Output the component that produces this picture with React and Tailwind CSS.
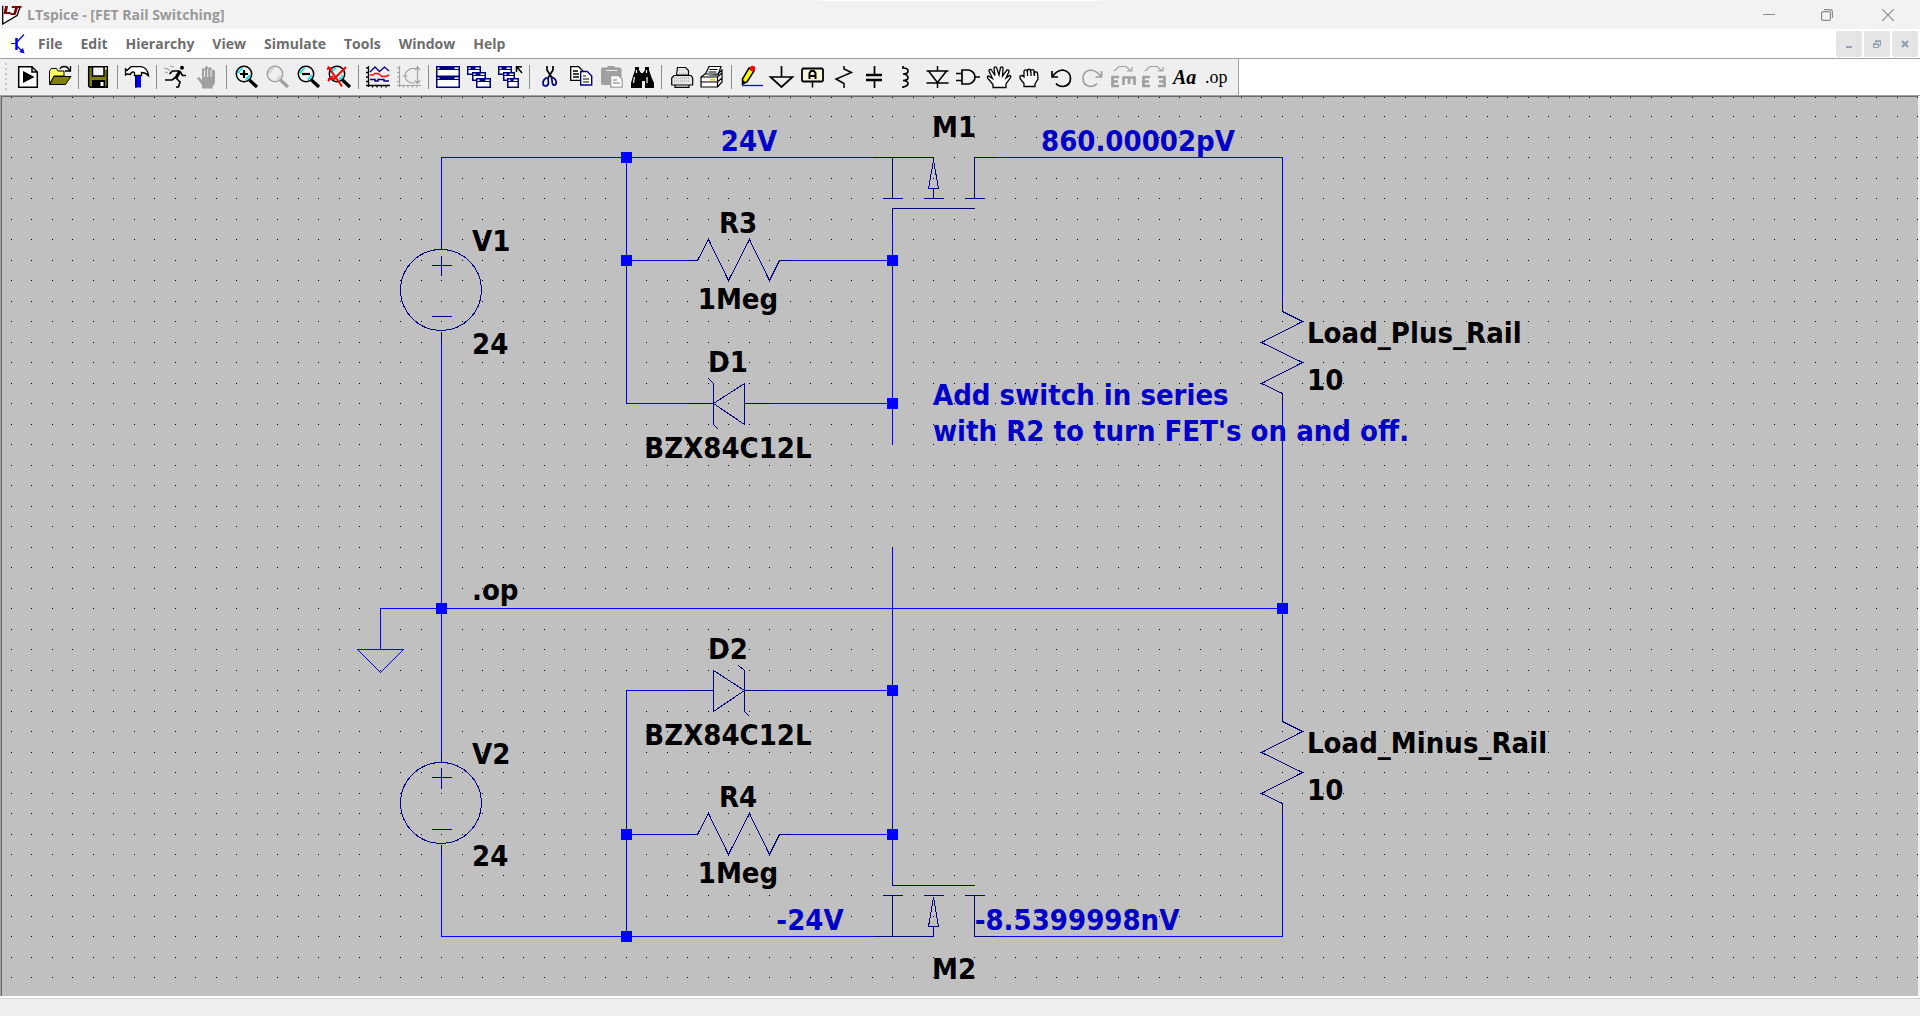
import clsx from 'clsx';

// schematic units -> canvas pixels (16 units per grid step), halves round down
const SCALE = 1.28125;
const px = (u) => Math.ceil(8.25 + u * SCALE) + 0.5;
const py = (u) => Math.ceil(-1.75 + u * SCALE) + 0.5;

const toPath = (points) => points.map(([x, y], i) => `${i ? 'L' : 'M'}${px(x)} ${py(y)}`).join('');

const MENUS = ['File', 'Edit', 'Hierarchy', 'View', 'Simulate', 'Tools', 'Window', 'Help'];

const WIRES = [
  [[336, 112], [336, 48], [672, 48]],
  [[480, 48], [480, 240], [528, 240]],
  [[480, 128], [528, 128]],
  [[608, 128], [688, 128]],
  [[592, 240], [688, 240]],
  [[688, 96], [688, 272]],
  [[768, 48], [992, 48], [992, 160]],
  [[992, 240], [992, 480]],
  [[336, 192], [336, 512]],
  [[288, 432], [288, 400], [992, 400]],
  [[688, 352], [688, 608]],
  [[528, 464], [480, 464], [480, 656]],
  [[592, 464], [688, 464]],
  [[480, 576], [528, 576]],
  [[608, 576], [688, 576]],
  [[336, 592], [336, 656], [672, 656]],
  [[992, 560], [992, 656], [768, 656]],
  [[270, 432], [306, 432], [288, 450], [270, 432]],
];

const JUNCTIONS = [
  [480, 48], [480, 128], [688, 128], [688, 240], [336, 400],
  [992, 400], [688, 464], [480, 576], [688, 576], [480, 656],
];

const LABELS = [
  { x: 470, y: 154, text: 'V1' },
  { x: 470, y: 257, text: '24' },
  { x: 736, y: 136, text: 'R3', anchor: 'middle' },
  { x: 736, y: 212, text: '1Meg', anchor: 'middle' },
  { x: 726, y: 275, text: 'D1', anchor: 'middle' },
  { x: 726, y: 361, text: 'BZX84C12L', anchor: 'middle' },
  { x: 930, y: 40, text: 'M1' },
  { x: 1305, y: 246, text: 'Load_Plus_Rail' },
  { x: 1305, y: 293, text: '10' },
  { x: 470, y: 503, text: '.op' },
  { x: 726, y: 562, text: 'D2', anchor: 'middle' },
  { x: 726, y: 648, text: 'BZX84C12L', anchor: 'middle' },
  { x: 470, y: 667, text: 'V2' },
  { x: 470, y: 769, text: '24' },
  { x: 736, y: 710, text: 'R4', anchor: 'middle' },
  { x: 736, y: 786, text: '1Meg', anchor: 'middle' },
  { x: 930, y: 882, text: 'M2' },
  { x: 1305, y: 656, text: 'Load_Minus_Rail' },
  { x: 1305, y: 703, text: '10' },
  { x: 747, y: 54, text: '24V', anchor: 'middle', note: true },
  { x: 1136, y: 54, text: '860.00002pV', anchor: 'middle', note: true },
  { x: 931, y: 308, text: 'Add switch in series', note: true },
  { x: 931, y: 344, text: "with R2 to turn FET's on and off.", note: true },
  { x: 808, y: 833, text: '-24V', anchor: 'middle', note: true },
  { x: 1075, y: 833, text: '-8.5399998nV', anchor: 'middle', note: true },
];

function VoltageSource({ x, y }) {
  return (
    <g>
      <circle cx={px(x) - 0.5} cy={py(y + 40) - 0.5} r="40.5" />
      <path d={toPath([[x, y], [x, y + 8]])} />
      <path d={toPath([[x, y + 72], [x, y + 80]])} />
      <path d={toPath([[x - 8, y + 20], [x + 8, y + 20]])} />
      <path d={toPath([[x, y + 12], [x, y + 28]])} />
      <path d={toPath([[x - 8, y + 60], [x + 8, y + 60]])} />
    </g>
  );
}

function ResistorH({ x, y }) {
  return (
    <path
      d={toPath([
        [x, y], [x + 8, y], [x + 16, y - 16], [x + 32, y + 16],
        [x + 48, y - 16], [x + 64, y + 16], [x + 72, y], [x + 80, y],
      ])}
    />
  );
}

function ResistorV({ x, y }) {
  return (
    <path
      d={toPath([
        [x, y], [x, y + 8], [x + 16, y + 16], [x - 16, y + 32],
        [x + 16, y + 48], [x - 16, y + 64], [x, y + 72], [x, y + 80],
      ])}
    />
  );
}

function Zener({ y, flipped }) {
  const bar = flipped ? 572 : 548;
  const base = flipped ? 548 : 572;
  return (
    <g>
      <path d={toPath([[528, y], [548, y]])} />
      <path d={toPath([[572, y], [592, y]])} />
      <path d={toPath([[bar, y], [base, y - 16], [base, y + 16], [bar, y]])} />
      <path d={toPath([[bar - 4, y - 20], [bar, y - 16], [bar, y + 16], [bar + 4, y + 20]])} />
    </g>
  );
}

function Mosfets() {
  return (
    <g>
      <path d={toPath([[672, 48], [720, 48], [720, 50], [716, 72], [724, 72], [720, 50]])} />
      <path d={toPath([[720, 72], [720, 80]])} />
      <path d={toPath([[688, 48], [688, 80]])} />
      <path d={toPath([[768, 48], [752, 48], [752, 80]])} />
      <path d={toPath([[688, 96], [688, 88], [752, 88]])} />
      <path d={toPath([[688, 608], [688, 616], [752, 616]])} />
      <path d={toPath([[672, 656], [720, 656], [720, 648], [716, 648], [720, 625], [724, 648], [720, 648]])} />
      <path d={toPath([[688, 624], [688, 656]])} />
      <path d={toPath([[752, 624], [752, 656], [768, 656]])} />
      {[688, 720, 752].map((x) => (
        <g key={x}>
          <path d={toPath([[x - 8, 80], [x + 8, 80]])} />
          <path d={toPath([[x - 8, 624], [x + 8, 624]])} />
        </g>
      ))}
    </g>
  );
}

function Schematic() {
  return (
    <svg className="block h-full w-full" role="img" aria-label="FET Rail Switching schematic">
      <defs>
        <pattern id="grid" width="41" height="41" patternUnits="userSpaceOnUse">
          <path d="M9 19h1v1h-1zM29 19h1v1h-1zM9 40h1v1h-1zM29 40h1v1h-1z" fill="#000" shapeRendering="crispEdges" />
        </pattern>
      </defs>
      <rect width="100%" height="100%" fill="url(#grid)" />
      <line x1="9" y1="0.5" x2="100%" y2="0.5" stroke="#000" strokeDasharray="1 19 1 20" shapeRendering="crispEdges" />
      <g fontFamily='"DejaVu Sans Condensed", "DejaVu Sans", sans-serif' fontSize="29" fontWeight="700">
        {LABELS.map((label, i) => (
          <text key={i} x={label.x} y={label.y} textAnchor={label.anchor} fill={label.note ? '#0000c8' : '#000'}>
            {label.text}
          </text>
        ))}
      </g>
      <g fill="none" stroke="#0000ff" shapeRendering="crispEdges">
        {WIRES.map((wire, i) => (
          <path key={i} d={toPath(wire)} />
        ))}
      </g>
      <g fill="none" stroke="#000080" shapeRendering="crispEdges">
        <VoltageSource x={336} y={112} />
        <VoltageSource x={336} y={512} />
        <ResistorH x={528} y={128} />
        <ResistorH x={528} y={576} />
        <ResistorV x={992} y={160} />
        <ResistorV x={992} y={480} />
        <Zener y={240} />
        <Zener y={464} flipped />
        <Mosfets />
      </g>
      {JUNCTIONS.map(([x, y]) => (
        <rect key={`${x}-${y}`} x={px(x) - 5.5} y={py(y) - 5.5} width="11" height="11" fill="#0000ff" />
      ))}
    </svg>
  );
}

function Magnifier({ gray, children }) {
  const ink = gray ? '#a0a0a0' : '#000';
  return (
    <>
      <circle cx="14" cy="9" r="7.7" fill={gray ? 'none' : '#f4f4f4'} stroke={ink} strokeWidth="1.5" />
      <path d="M8.5 8.5q1-4 4.5-5M19.5 10q-1 3.5-4 4.5" fill="none" stroke={gray ? '#d0d0d0' : '#00e5ee'} strokeWidth="1.7" />
      <path d="M19.5 15L27 22" fill="none" stroke={ink} strokeWidth="3.2" />
      {children}
    </>
  );
}

function MiniWindow({ x, y, w, h }) {
  return (
    <>
      <rect x={x + 0.75} y={y + 0.75} width={w - 1.5} height={h - 1.5} fill="#fff" stroke="#000080" strokeWidth="1.5" />
      <path d={`M${x} ${y}h${w}v4h-${w}z`} fill="#000080" />
      <path d={`M${x + 1.5} ${y + 1.5}h2v1.5h-2zM${x + w - 5.5} ${y + 1.5}h4v1.5h-4z`} fill="#fff" />
    </>
  );
}

const K = { fill: 'none', stroke: '#000', strokeWidth: 1.5 };
const G = { fill: 'none', stroke: '#a0a0a0', strokeWidth: 1.5 };

const TOOLS = [
  ['Run', <>
    <path {...K} fill="#fff" d="M6.7 1.7H20L25.3 7V22.3H6.7zM20 1.7V7h5.3" />
    <path d="M11 6l11.5 6L11 18z" />
  </>],
  ['Open', <>
    <path {...K} fill="#ffff66" strokeWidth="1" d="M6.5 19V6l2-2.5h5L15 6h6v5H11z" />
    <path fill="#808000" stroke="#000" d="M11 11.5h17L22.5 19.5H6.5z" />
    <path {...K} d="M17 4q1-2.5 4-2.5 4 0 5.5 4M22 6h5.5V1" strokeWidth="1.3" />
  </>],
  null,
  ['Save', <>
    <path fill="#808000" stroke="#000" strokeWidth="1.5" d="M6.7 1.7H25.3V22.3H8L6.7 21z" />
    <path {...K} fill="#f4f4f4" d="M10.5 1.7h11.5V11H10.5z" />
    <path d="M10 15h13v7.5H10z" />
    <path d="M18.5 17h3v4h-3zM23 2.5h1.5v2H23z" fill="#fff" />
  </>],
  null,
  ['Control Panel', <>
    <path {...K} fill="#fff" strokeWidth="1.3" d="M4.5 4l1.5 1.5L10 1.7H20q6.500 1 7.500 9-3-3.200-7-3.200v3h-7v-3L12 7q-2 0-2.500 2.500L6 9 4.500 10z" />
    <path d="M14 11h6v11.5h-6z" fill="#0000ff" />
    <path d="M14 11h2v11.5h-2z" fill="#000080" />
  </>],
  null,
  ['Simulate', <>
    <circle cx="22" cy="2.7" r="2" />
    <path {...K} strokeWidth="3.2" d="M20 6l-4 7" />
    <path {...K} d="M19.5 6h-7L9.5 9M20 6.5l2.5 4H26M16 12l-4 3H5M16 13l4 4-1.5 5H16" strokeWidth="1.7" />
    <path {...G} strokeWidth="1.2" d="M4 3l4 1 2 2M10 1l4 1M5 7l3 1" />
  </>],
  ['Halt', <>
    <path fill="#a0a0a0" d="M6 13l2-1 3 3V4l1.5-1L14 4V2l1.5-1L17 2v1l2-1 1.5 1v2l2-.5 1.5 1.500v12l-2.500 4v1.500H11V20z" />
    <path d="M13.5 5v7M16.7 4v8M20 5v7" stroke="#efefef" />
  </>],
  null,
  ['Zoom In', <Magnifier><path d="M10 9h8M14 5v8" stroke="#000" strokeWidth="2.2" /></Magnifier>],
  ['Pan', <Magnifier gray />],
  ['Zoom Out', <Magnifier><path d="M10 9h8" stroke="#000" strokeWidth="2.2" /></Magnifier>],
  ['Zoom Fit', <Magnifier><path d="M5 1.5l14 20M23 2L11 14H5M4 4l5-1M5 16l5-5" fill="none" stroke="#ff0000" strokeWidth="2" /></Magnifier>],
  null,
  ['Autorange', <>
    <path {...K} strokeWidth="1.3" d="M6.5 1v21M4 20.5h24M4 3h2.5M4 7.5h2.5M4 12h2.5M4 16.5h2.5M10.5 20v2.5M15 20v2.5M19.5 20v2.5M24 20v2.5" />
    <path d="M8 7l5-5 4.5 4.5L22.5 2 27 6" fill="none" stroke="#000080" strokeWidth="1.3" />
    <path d="M8 10h3l2-1.5h3l4 3h4l3-1.5" fill="none" stroke="#ff0000" strokeWidth="1.4" />
    <path d="M8 14.5h5V16h3v-1.5h6V16h5" fill="none" stroke="#000080" strokeWidth="1.4" />
  </>],
  ['Smith Chart', <path {...G} strokeWidth="1.2" d="M6.5 1v21M4 20.5h24M4 3h2.5M4 7.5h2.5M4 12h2.5M4 16.5h2.5M10.5 20v2.5M15 20v2.5M19.5 20v2.5M24 20v2.5M24.500 1v18M22 3.500h-4q-6 3-6 7.500t6 7h4M9.500 11h5M22 5l2.500-3L27 5M22 15.500l2.500 3 2.500-3" />],
  null,
  ['Tile Windows', <>
    <MiniWindow x={4} y={1} w={24} h={11} />
    <MiniWindow x={4} y={11} w={24} h={12} />
  </>],
  ['Cascade Windows', <>
    <MiniWindow x={4} y={1} w={14} h={9} />
    <MiniWindow x={9} y={7} w={14} h={9} />
    <MiniWindow x={13} y={13} w={15} h={10} />
  </>],
  ['Close All Windows', <>
    <MiniWindow x={4} y={1} w={14} h={9} />
    <MiniWindow x={9} y={7} w={12} h={9} />
    <MiniWindow x={13} y={13} w={12} h={10} />
    <path {...K} d="M28 8l-5-6M22.5 7V1.7H28" />
  </>],
  null,
  ['Cut', <>
    <path {...K} strokeWidth="1.7" d="M14 1v4l5 8M20 1v4l-5 8" />
    <path fill="none" stroke="#000080" strokeWidth="1.7" d="M15 13h-2q-3 2-3 5 0 3 2.5 3t3-3zM18.5 12l1 7q1 1.5 2.5 1 2-1.500 1-4-1-3-4.500-4" />
  </>],
  ['Copy', <>
    <path {...K} fill="#fff" strokeWidth="1.3" d="M6.7 1.7h8l4 4V15.3h-12zM9 6h5M9 9h6M9 12h6" />
    <path fill="#fff" stroke="#000080" strokeWidth="1.4" d="M16.7 6.5h6.5l4.5 4.500v9h-11z" />
    <path {...K} strokeWidth="1.2" d="M19 11h3M19 14h6M19 17h6" />
  </>],
  ['Paste', <>
    <path fill="#a0a0a0" d="M6 4q0-1.5 2-1.5h4L13 1h6l1 1.5h4q2.5 0 2.5 2V12H17v8H8q-2 0-2-2z" />
    <path d="M11 5.5h11" stroke="#efefef" />
    <path {...G} fill="#fff" strokeWidth="1.3" d="M15.7 10.7h8l3.5 3.500v8h-11.500zM18 15h4M18 18h7" />
  </>],
  ['Find', <>
    <path d="M9 2h4v3l2 3h2l2-3V2h4v3l2 6 3 7v5h-9v-7h-3v7H5v-5l2-7 2-6z" />
    <path d="M10.5 5v3M8.5 12l-1 6M20.5 5v3M21 12v6" stroke="#fff" strokeWidth="1.2" />
  </>],
  null,
  ['Print', <>
    <path {...K} fill="#f0f0f0" strokeWidth="1.2" d="M11.5 10l1-7.500h8l3 3V10z" />
    <path {...K} fill="#e4e4e4" strokeWidth="1.2" d="M9 10.5h17l1.700 2.500v7H6.700v-7zM10 20v2.300h14V20" />
    <path d="M9 13h16M9 16h16M14 5h5M14 8h7" stroke="#a0a0a0" strokeDasharray="1 1" />
  </>],
  ['Print Setup', <>
    <path {...K} fill="#fff" strokeWidth="1.2" d="M9 10l4-8.500h12L22 10zM13.500 4.500h8M12.500 7h8" />
    <path {...K} fill="#fff" strokeWidth="1.2" d="M5 12l4-3h13l4-4v12l-4.500 5H5zM5 12h16.500l4.500-4M21.500 12v10M5 17h16.500l4.500-4" />
    <path d="M14 14.7h5" stroke="#e6d800" strokeWidth="1.7" />
  </>],
  null,
  ['Draw Wire', <>
    <path fill="#ffff00" stroke="#000" strokeWidth="1.5" d="M14 3l5 3-7 11-4.500 2V14z" />
    <path d="M7 14.5l3.500 2.500L7 20z" />
    <circle cx="17.5" cy="3.5" r="2.7" fill="#ff0000" />
    <path d="M7 20.5h21" stroke="#0000ff" strokeWidth="1.3" />
  </>],
  ['Ground', <path {...K} strokeWidth="1.7" d="M15.5 1v11M4.5 12h22L15.5 22z" />],
  ['Label Net', <>
    <path {...K} fill="#f7f7d8" strokeWidth="1.8" d="M6 3.5h19l1 1v11l-1 1H6l-1-1v-11z" />
    <path {...K} d="M15.5 17v5.5" />
    <path {...K} strokeWidth="2" d="M12.5 14V8l1.500-2h3l1.500 2v6M12.500 11h6" />
  </>],
  ['Resistor', <path {...K} d="M16 1v3l7.500 3.500L8 14l8 4.500V23" />],
  ['Capacitor', <>
    <path {...K} strokeWidth="1.7" d="M15.5 1v9M15.5 15v8" />
    <path {...K} strokeWidth="2.3" d="M7 10h16M7 15h16" />
  </>],
  ['Inductor', <path {...K} strokeWidth="1.7" d="M13 1v2q5 0 5 3t-5 3q5 .5 5 3.500t-5 3q5 .5 5 3t-5 3.500V23" />],
  ['Diode', <path {...K} d="M16.5 1v5M5.5 6h22M7.5 6l9 11.500 9-11.500M5.500 18h22M16.500 18v5" />],
  ['Component', <path {...K} strokeWidth="1.7" d="M4 8.5h6M4 15.500h6M10 5h7q6 2 6 7t-6 7h-7zM23 12h5" />],
  ['Move', <path {...K} fill="#fff" strokeWidth="1.3" d="M10 22.5v-3L5 13.500q-1.500-2 .5-2.500l4 2.500L6 6q0-2 2-1.500l4 6L11 3q1-2 2.500-.5L16 10l1.500-7.500q2-1.500 2.500.5l-.5 8L24 5q2-.5 2 1.500L23 13l3.500-2.500q2 .5 1 2L23 19v3.500z" />],
  ['Drag', <path {...K} fill="#fff" strokeWidth="1.3" d="M10 21.5v-3l-4-5V11l2.500-.5L10 12V6q1-2 3-.5l.5 2V5q1.500-1.500 3 0V7.500L17 5q2-1 3 .5v3l1-1.500q2.500-.5 2.500 1.500L24 14l-3 5v2.500zM13.500 7v4M17 7v4M20.500 8v3" />],
  ['Undo', <path {...K} strokeWidth="1.7" d="M7 6v6h6M7.5 11.500Q12 5 18 5q7.500 1.500 7.500 8.500 0 7-7.500 8-4.500 0-7-3" />],
  ['Redo', <path {...G} strokeWidth="1.7" d="M25.5 6v6h-6M25 11.500Q20 5 14 5q-7 1.500-7 8.500 0 7 7 8 4.500 0 7-3" />],
  ['Rotate', <>
    <path {...G} strokeWidth="1.2" d="M7 6l5-4.500h7L24 6M20 6h5V2" />
    <path {...G} strokeWidth="2.7" d="M12 12H5.500v9H12M5.500 16.500H11M16.500 20v-7.500h11V20M22 13v6" />
  </>],
  ['Mirror', <>
    <path {...G} strokeWidth="1.2" d="M7 6l5-4.500h7L24 6M20 6h5V2" />
    <path {...G} strokeWidth="2.7" d="M12 12H5.500v9H12M5.500 16.500H11M20 12h6.500v9H20M26.500 16.500H21" />
  </>],
  ['Text', <text x="4" y="19" fontFamily='"Liberation Serif", serif' fontSize="20" fontWeight="700" fontStyle="italic">Aa</text>],
  ['SPICE Directive', <text x="5" y="18" fontFamily='"Liberation Serif", serif' fontSize="18">.op</text>],
];

function Toolbar() {
  return (
    <div className="flex h-9 shrink-0 bg-white">
      <div className="flex items-center border-r border-[#a0a0a0] bg-[#efefef] pr-[7px] pl-[5px]">
        <div className="mr-[5px] h-7 w-0.5 bg-[repeating-linear-gradient(to_bottom,#c4c4c4_0px_2px,#efefef_2px_5px)]" />
        {TOOLS.map((tool, i) =>
          tool ? (
            <button key={tool[0]} type="button" aria-label={tool[0]} className="h-6 w-[31px]">
              <svg className="block h-6 w-[31px]" viewBox="0 0 31 24">{tool[1]}</svg>
            </button>
          ) : (
            <div key={i} className="flex h-6 w-2 justify-center">
              <div className="w-px bg-[#8c8c8c]" />
            </div>
          )
        )}
      </div>
    </div>
  );
}

function TitleBar() {
  return (
    <header className="relative flex h-[29px] shrink-0 items-center justify-between bg-[#f2f2f2]">
      <div className="absolute top-0 left-1/2 h-px w-[276px] -translate-x-1/2 bg-white" />
      <div className="flex items-center gap-[5px] pl-0.5">
        <svg className="size-5" viewBox="0 0 20 20">
          <path d="M.7 .7V19L15 10.5 18.5 1" fill="#fff" stroke="#000" strokeWidth="1.3" />
          <path d="M3 1h3L5 7h4l-1 2H1.500zM10 1h10l-1 2h-3l-2.500 7H8l1-2h2.500L13 3H9.500z" fill="#800000" />
        </svg>
        <h1 className="font-['Open_Sans',sans-serif] text-sm font-bold text-[#999999]">LTspice - [FET Rail Switching]</h1>
      </div>
      <div className="flex">
        <button type="button" aria-label="Minimize" className="flex w-[58px] justify-center">
          <svg className="size-3" viewBox="0 0 12 12"><path d="M0 5.5h12" stroke="#8c8c8c" /></svg>
        </button>
        <button type="button" aria-label="Restore" className="flex w-[58px] justify-center">
          <svg className="size-3" viewBox="0 0 12 12" fill="none" stroke="#8c8c8c" strokeWidth="1.2">
            <rect x=".6" y="2.6" width="8.8" height="8.8" rx="1.5" />
            <path d="M3 .6h6q2.400 0 2.400 2.400v6" />
          </svg>
        </button>
        <button type="button" aria-label="Close" className="flex w-16 justify-center">
          <svg className="size-3" viewBox="0 0 12 12"><path d="M0 0l12 12M12 0L0 12" stroke="#8c8c8c" strokeWidth="1.2" /></svg>
        </button>
      </div>
    </header>
  );
}

function MenuBar() {
  const child = 'flex size-[26px] items-center justify-center rounded-xs bg-[#e5e5e5]';
  return (
    <div className="flex h-[30px] shrink-0 items-center justify-between border-b border-[#a0a0a0] bg-white pr-0.5 pl-[11px]">
      <div className="flex items-center">
        <svg className="mr-[5px] h-5 w-[15px]" viewBox="0 0 15 20" fill="none" stroke="#0000ff">
          <path d="M0 9.5h5M6 8l7-7.500M6 12l5 5" strokeWidth="1.2" />
          <path d="M5.5 4v12" strokeWidth="2.5" />
          <path d="M13.5 19.500l-5.500-1.500 4-4z" fill="#0000ff" stroke="none" />
        </svg>
        <nav className="flex">
          {MENUS.map((menu) => (
            <button
              key={menu}
              type="button"
              className={clsx('pr-[9px] font-["Open_Sans",sans-serif] text-sm font-bold text-[#6d6d6d]', menu === 'File' ? 'pl-[7px]' : 'pl-[9px]')}
            >
              {menu}
            </button>
          ))}
        </nav>
      </div>
      <div className="flex gap-0.5">
        <button type="button" aria-label="Minimize document" className={child}>
          <svg className="size-2" viewBox="0 0 8 8"><path d="M1 6h6v2H1z" fill="#92a0ae" /></svg>
        </button>
        <button type="button" aria-label="Restore document" className={child}>
          <svg className="size-2" viewBox="0 0 8 8" fill="none" stroke="#92a0ae">
            <path d="M.5 4.500h5v3h-5zM2.500 3V1.500h5v4H6" />
            <path d="M2 1h6M0 4h6" strokeWidth="1.5" />
          </svg>
        </button>
        <button type="button" aria-label="Close document" className={child}>
          <svg className="size-2" viewBox="0 0 8 8"><path d="M1 1l6 6M7 1L1 7" stroke="#92a0ae" strokeWidth="2.2" /></svg>
        </button>
      </div>
    </div>
  );
}

export default function App() {
  return (
    <div className="flex h-screen flex-col overflow-hidden bg-[#efefef]">
      <TitleBar />
      <MenuBar />
      <Toolbar />
      <main className="min-h-0 flex-1 border-t border-l border-[#a0a0a0] bg-[#f2f2f2] pr-0.5">
        <div className="h-full border-t border-l border-[#696969] bg-[#c0c0c0]">
          <Schematic />
        </div>
      </main>
      <footer className="h-5 shrink-0 border-t-2 border-white">
        <div className="h-full border-t border-[#d4d4d4]" />
      </footer>
    </div>
  );
}
